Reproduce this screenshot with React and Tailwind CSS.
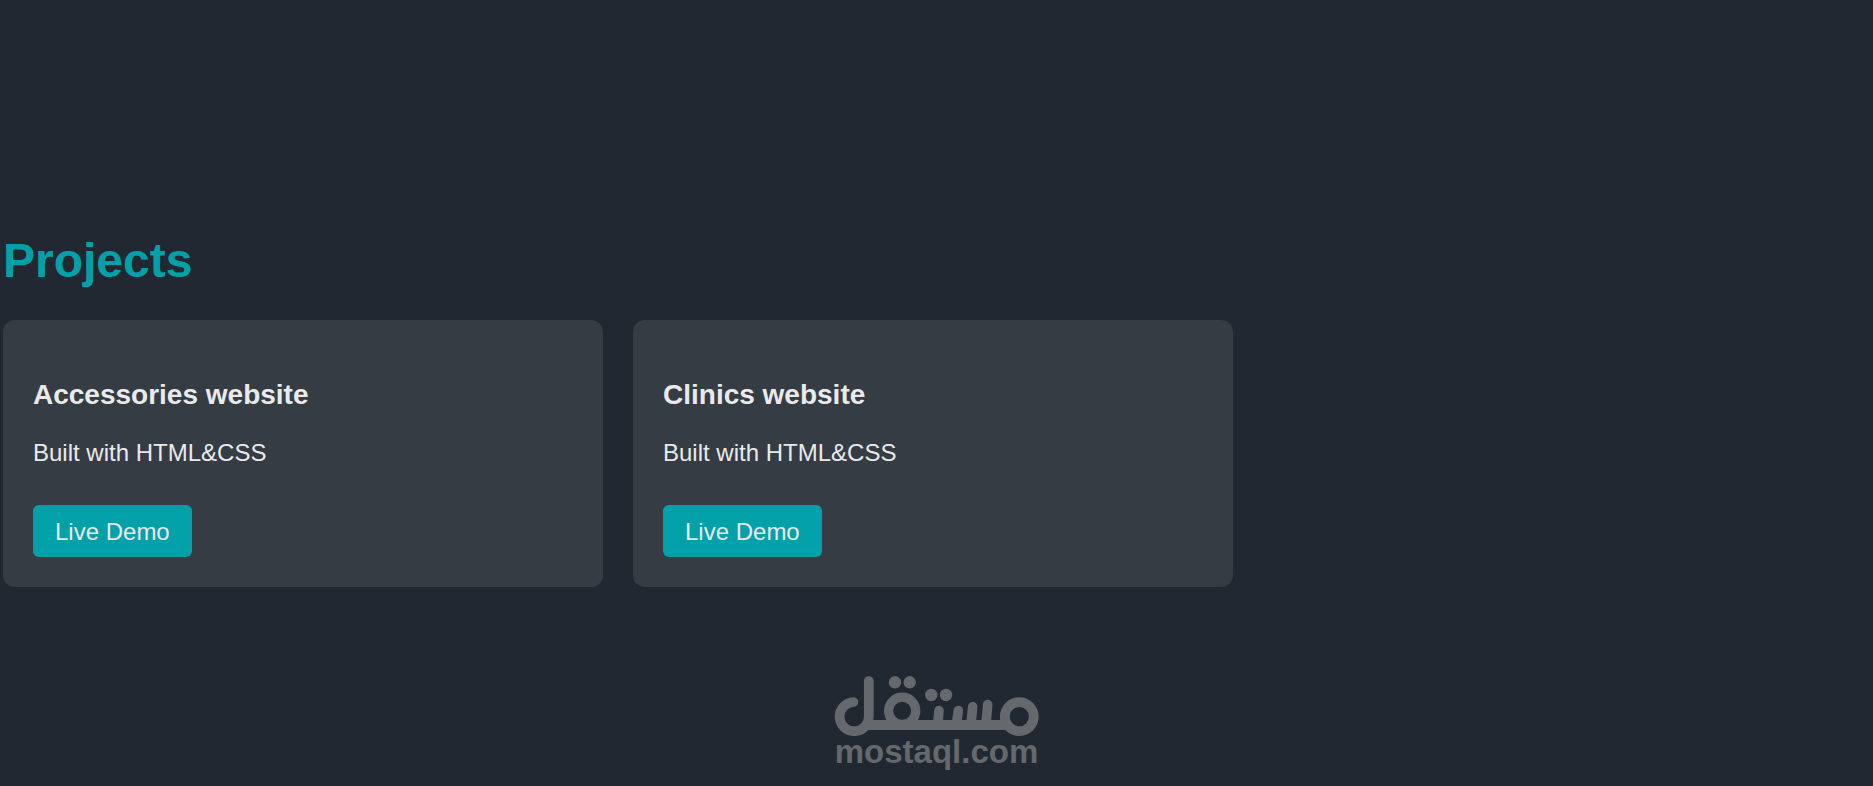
const projects = [
  { title: "Accessories website", description: "Built with HTML&CSS" },
  { title: "Clinics website", description: "Built with HTML&CSS" },
];

function ProjectCard({ title, description }) {
  return (
    <article className="w-full max-w-[600px] rounded-xl bg-[#363c44] px-[30px] pt-[59px] pb-[30px]">
      <h3 className="text-[28px] leading-8 font-bold">{title}</h3>
      <p className="mt-7 text-2xl leading-7">{description}</p>
      <a
        href="#demo"
        className="mt-[38px] block w-fit rounded-md bg-[#02a0a8] px-[22px] pt-[13px] pb-[11px] text-2xl leading-7"
      >
        Live Demo
      </a>
    </article>
  );
}

function MostaqlMark() {
  return (
    <svg viewBox="0 0 206 60" className="h-[60px] w-[206px]" fill="none" stroke="currentColor" aria-hidden="true">
      <path
        d="M19.5 26A14.6 14.6 0 1 0 34.8 40.5V5"
        strokeWidth="9.7"
        strokeLinecap="round"
      />
      <path d="M32 49H174" strokeWidth="9.8" />
      <circle cx="68.2" cy="34.8" r="13.6" strokeWidth="9.2" />
      <circle cx="185.3" cy="40.6" r="14.5" strokeWidth="9.8" />
      <path
        d="M105 34.5L103.800 48M124.300 34.5L122.500 48M138.700 30.8L137 48M153.700 28.5L152 48"
        strokeWidth="9.6"
        strokeLinecap="round"
      />
      <g fill="currentColor" stroke="none">
        <circle cx="61" cy="6.3" r="6.2" />
        <circle cx="75.7" cy="6.3" r="6.2" />
        <circle cx="97.3" cy="19" r="6.2" />
        <circle cx="112" cy="19" r="6.2" />
      </g>
    </svg>
  );
}

export default function App() {
  return (
    <div className="flex min-h-screen flex-col bg-[#222831] font-['Liberation_Sans',Arial,sans-serif] text-[#e8eaeb]">
      <main className="px-[3px] pt-[233px]">
        <h2 className="text-5xl leading-14 font-bold text-[#02a0a8]">Projects</h2>
        <section className="mt-[31px] flex gap-[30px]">
          {projects.map((project) => (
            <ProjectCard key={project.title} {...project} />
          ))}
        </section>
      </main>
      <footer className="mt-auto flex flex-col items-center pb-[18px] text-[#65686c]">
        <MostaqlMark />
        <a href="#mostaql" className="text-[33px] leading-8 font-bold">
          mostaql.com
        </a>
      </footer>
    </div>
  );
}
